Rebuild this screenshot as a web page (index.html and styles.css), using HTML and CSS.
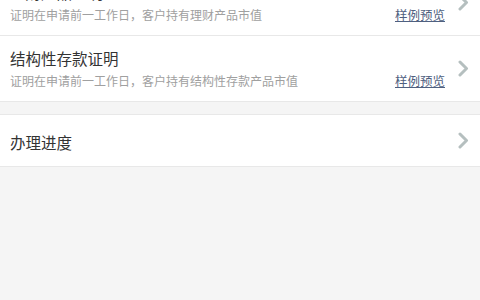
FILE: index.html
```html
<!DOCTYPE html>
<html lang="zh-CN">
<head>
  <meta charset="UTF-8">
  <title>证明开立</title>
  <link rel="stylesheet" href="styles.css">
</head>
<body>

<div class="group first">
  <div class="item">
    <div class="item-body">
      <div class="item-title">理财产品证明</div>
      <div class="item-row">
        <span class="item-desc">证明在申请前一工作日，客户持有理财产品市值</span>
        <a class="preview">样例预览</a>
      </div>
    </div>
    <svg class="chevron" viewBox="0 0 11 17"><path d="M2 2 L8.5 8.5 L2 15"/></svg>
  </div>
  <div class="item">
    <div class="item-body">
      <div class="item-title">结构性存款证明</div>
      <div class="item-row">
        <span class="item-desc">证明在申请前一工作日，客户持有结构性存款产品市值</span>
        <a class="preview">样例预览</a>
      </div>
    </div>
    <svg class="chevron" viewBox="0 0 11 17"><path d="M2 2 L8.5 8.5 L2 15"/></svg>
  </div>
</div>

<div class="group">
  <div class="item simple">
    <div class="item-body">
      <div class="item-title">办理进度</div>
    </div>
    <svg class="chevron" viewBox="0 0 11 17"><path d="M2 2 L8.5 8.5 L2 15"/></svg>
  </div>
</div>

</body>
</html>
```

FILE: styles.css
```css
body {
  margin: 0;
  background: #f5f5f5;
  font-family: "Noto Sans CJK SC", "Noto Sans", sans-serif;
  color: #333;
}

.group {
  background: #fff;
  border-top: 1px solid #e8e8e8;
  border-bottom: 1px solid #e8e8e8;
  margin-bottom: 12px;
}

.group.first {
  margin-top: -30px;
  border-top: none;
}

.item {
  display: flex;
  align-items: center;
  padding: 11px 11px 12px 10px;
  border-bottom: 1px solid #e8e8e8;
}

.item:last-child {
  border-bottom: none;
}

.item.simple {
  height: 51px;
  padding-top: 0;
  padding-bottom: 0;
  box-sizing: border-box;
}

.item-body {
  flex: 1;
}

.item-title {
  font-size: 15.5px;
  line-height: 22px;
  color: #333;
}

.simple .item-title {
  margin-top: 2px;
}

.item-row {
  display: flex;
  justify-content: space-between;
  align-items: center;
  margin-top: 3px;
}

.item-desc {
  font-size: 12px;
  line-height: 17px;
  color: #a0a0a0;
}

.preview {
  font-size: 12.5px;
  line-height: 17px;
  color: #4f6080;
  text-decoration: underline;
  margin-right: 13px;
}

.chevron {
  width: 11px;
  height: 17px;
  flex: none;
  fill: none;
  stroke: #b5bfbf;
  stroke-width: 3;
  stroke-linecap: round;
  stroke-linejoin: round;
}
```
